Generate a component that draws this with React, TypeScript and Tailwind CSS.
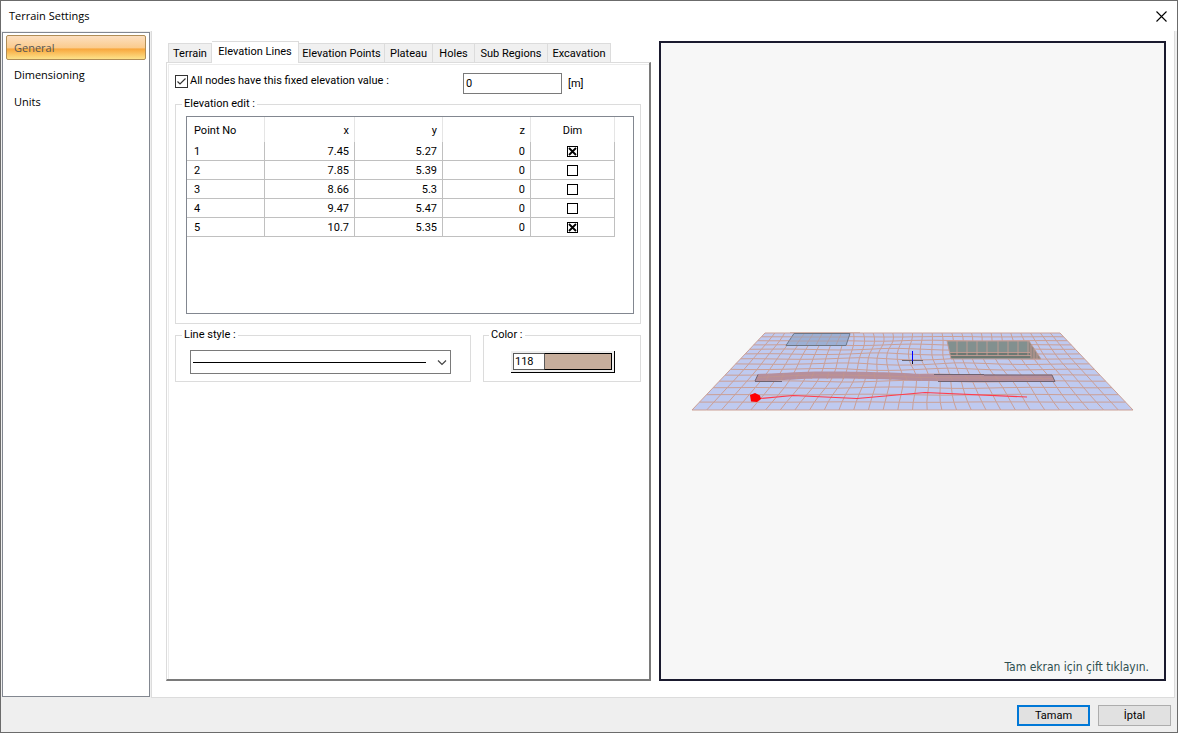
import { useState } from "react"
import clsx from "clsx"

interface ElevationPoint {
  no: number
  x: string
  y: string
  z: string
  dim: boolean
}

const initialPoints: ElevationPoint[] = [
  { no: 1, x: "7.45", y: "5.27", z: "0", dim: true },
  { no: 2, x: "7.85", y: "5.39", z: "0", dim: false },
  { no: 3, x: "8.66", y: "5.3", z: "0", dim: false },
  { no: 4, x: "9.47", y: "5.47", z: "0", dim: false },
  { no: 5, x: "10.7", y: "5.35", z: "0", dim: true },
]

const sections = ["General", "Dimensioning", "Units"]

const tabs = [
  { label: "Terrain", width: "w-[44px]" },
  { label: "Elevation Lines", width: "w-[87px]" },
  { label: "Elevation Points", width: "w-[86px]" },
  { label: "Plateau", width: "w-[48px]" },
  { label: "Holes", width: "w-[42px]" },
  { label: "Sub Regions", width: "w-[73px]" },
  { label: "Excavation", width: "w-[63px]" },
]

const COLS = 30
const ROWS = 14

function meshNode(i: number, j: number) {
  const u = i / COLS
  const v = j / ROWS
  const depth = (v * 0.67) / (1 - v * 0.33)
  const edge = Math.sin(Math.PI * u) * Math.sin(Math.PI * v)
  const sides = Math.sin(Math.PI * v) * Math.sin(2 * Math.PI * u)
  const left = 93 - 73 * depth
  const right = 388 + 73 * depth
  const x = left + (right - left) * u + edge * (3 * Math.sin(i * 0.7 + j * 0.3) + 3 * Math.cos(j * 0.6)) + sides * 6
  const y = 27 + 77 * depth + edge * 1.2 * Math.sin(i * 0.55 + j * 0.9)
  return `${x.toFixed(1)} ${y.toFixed(1)}`
}

function meshPath() {
  const lines: string[] = []
  for (let j = 0; j <= ROWS; j++) {
    lines.push("M" + Array.from({ length: COLS + 1 }, (_, i) => meshNode(i, j)).join("L"))
  }
  for (let i = 0; i <= COLS; i++) {
    lines.push("M" + Array.from({ length: ROWS + 1 }, (_, j) => meshNode(i, j)).join("L"))
  }
  return lines.join("")
}

function TerrainScene() {
  return (
    <svg viewBox="1 0 480 110" className="w-[480px] shrink-0" role="img" aria-label="Terrain preview">
      <path d="M93 27H388L461 104H20Z" fill="#bfcaf0" />
      <path d={meshPath()} fill="none" stroke="#cb9f95" />

      {/* plateau */}
      <path d="M122 27.500H178L174 39.500H114Z" fill="#9bafd4" stroke="#6d7684" />
      <path d="M132 28L124 39M141 28L134 39M150 28L144 39M160 28L154 39M169 28L164 39M119 31H176M117 35H175" stroke="#b39c9f" strokeWidth="0.8" />
      <path d="M118 26.500H188" stroke="#cfa9a0" strokeWidth="0.8" />

      {/* road */}
      <path d="M86 68C115 67 128 65.500 151 65.500S222 66 248 68L380 69L383 75.500L248 75C220 73 180 72.500 151 72.500S110 75 83 75.500Z" fill="#b68f9c" />
      <path
        d="M85 71.500C115 70 130 69 151 69S222 70 248 71.500L381 72.500M97 68L94 75M112 67L109 74M127 66L124 73M142 66L139 73M157 66L155 73M172 66L171 73M187 66L187 73M202 66L203 73M217 67L219 74M232 67L235 74M247 68L250 75M262 68L266 75M277 68L281 75M292 68L297 75M307 68L312 75M322 68L327 75M337 69L342 75M352 69L357 75M367 69L372 75"
        fill="none"
        stroke="#c0958f"
        strokeWidth="0.8"
      />
      <path d="M83 75L86 68.500M83 75.500H110M262 68.500H312M312 69H380M266 75.500H383M380 69L383 75.500" fill="none" stroke="#6f6370" />

      {/* excavation */}
      <path d="M275 35H357L369 53H279Z" fill="#82908f" />
      <path d="M278 46.500H358L360 52H279Z" fill="#6c7872" />
      <path d="M357 35L369 53H360L357 46Z" fill="#8f8681" />
      <path
        d="M275 35H357L369 53H279ZM285 35V50M295 35V50M305 35V50M315 35V50M326 35V50M336 35V50M346 35V50M356 35V50M277 46.500H358M278 49.500H359M359 39V52M362 43V53M365 47V53"
        fill="none"
        stroke="#c39c94"
        strokeWidth="0.9"
      />

      {/* elevation line */}
      <path d="M88 92.500L121 89.500L185 92.500L253 86.500L355 91" fill="none" stroke="#ff3b4e" strokeWidth="1.200" />
      <path d="M78 89L83 87L88 89.500L89 93L85 96L79 95.500Z" fill="#ff0000" />

      {/* origin cross */}
      <g shapeRendering="crispEdges">
        <rect x="230" y="54" width="21" height="1" fill="#6b6670" />
        <rect x="240" y="45" width="1" height="10" fill="#0000ff" />
        <rect x="240" y="55" width="1" height="3" fill="#10102a" />
      </g>
    </svg>
  )
}

function Sidebar() {
  const [active, setActive] = useState("General")
  return (
    <nav className="mt-[1px] mb-[1px] flex w-[148px] shrink-0 flex-col gap-[2px] border border-[#828790] bg-white px-[3px] pt-[2px] font-['Open_Sans',sans-serif]">
      {sections.map((name) => (
        <button
          key={name}
          onClick={() => setActive(name)}
          className={clsx(
            "h-[25px] rounded-[2px] border px-[7px] text-left",
            name === active
              ? "border-[#b08d56] bg-[linear-gradient(#fcdfc0_0%,#fbcb8c_52%,#f8a63c_56%,#fde28a_100%)] text-[#555555]"
              : "border-transparent text-black"
          )}
        >
          {name}
        </button>
      ))}
    </nav>
  )
}

function PointsTable() {
  const [points, setPoints] = useState(initialPoints)

  const toggle = (no: number) => setPoints(points.map((p) => (p.no === no ? { ...p, dim: !p.dim } : p)))

  return (
    <div className="h-[198px] border border-[#828790] bg-white">
      <table className="w-[428px] table-fixed border-separate border-spacing-0">
        <colgroup>
          <col className="w-[78px]" />
          <col className="w-[90px]" />
          <col className="w-[88px]" />
          <col className="w-[88px]" />
          <col className="w-[84px]" />
        </colgroup>
        <thead>
          <tr className="h-[25px]">
            <th className="border-r border-[#e5e5e5] p-0 pt-[2px] pl-[7px] text-left font-normal">Point No</th>
            <th className="border-r border-[#e5e5e5] p-0 pt-[2px] pr-[5px] text-right font-normal">x</th>
            <th className="border-r border-[#e5e5e5] p-0 pt-[2px] pr-[5px] text-right font-normal">y</th>
            <th className="border-r border-[#e5e5e5] p-0 pt-[2px] pr-[5px] text-right font-normal">z</th>
            <th className="border-r border-[#e5e5e5] p-0 pt-[2px] text-center font-normal">Dim</th>
          </tr>
        </thead>
        <tbody>
          {points.map((p) => (
            <tr key={p.no} className="h-[19px]">
              <td className="border-r border-b border-[#c0c0c0] p-0 pt-[2px] pl-[7px]">{p.no}</td>
              <td className="border-r border-b border-[#c0c0c0] p-0 pt-[2px] pr-[5px] text-right">{p.x}</td>
              <td className="border-r border-b border-[#c0c0c0] p-0 pt-[2px] pr-[5px] text-right">{p.y}</td>
              <td className="border-r border-b border-[#c0c0c0] p-0 pt-[2px] pr-[5px] text-right">{p.z}</td>
              <td className="border-r border-b border-[#c0c0c0] p-0">
                <label className="relative mx-auto block h-[11px] w-[11px]">
                  <input
                    type="checkbox"
                    aria-label={`Dim ${p.no}`}
                    checked={p.dim}
                    onChange={() => toggle(p.no)}
                    className="block h-[11px] w-[11px] appearance-none border border-black bg-white"
                  />
                  {p.dim && (
                    <svg viewBox="0 0 11 11" className="pointer-events-none absolute inset-0 h-[11px] w-[11px]">
                      <path d="M2 2L9 9M9 2L2 9" stroke="#000" strokeWidth="1.800" />
                    </svg>
                  )}
                </label>
              </td>
            </tr>
          ))}
        </tbody>
      </table>
    </div>
  )
}

function ElevationLinesTab() {
  const [fixed, setFixed] = useState(true)
  const [value, setValue] = useState("0")
  const [color, setColor] = useState("118")

  return (
    <div className="pt-[8px] pr-[8px] pl-[6px]">
      <div className="flex h-[21px] items-start">
        <label className="flex w-[288px] items-center gap-[2px] leading-[16px]">
          <span className="relative block h-[13px] w-[13px]">
            <input
              type="checkbox"
              checked={fixed}
              onChange={() => setFixed(!fixed)}
              className="block h-[13px] w-[13px] appearance-none border border-[#333333] bg-white"
            />
            {fixed && (
              <svg viewBox="0 0 13 13" className="pointer-events-none absolute inset-0 h-[13px] w-[13px]">
                <path d="M2.500 6.500L5 9L10.500 3.500" fill="none" stroke="#333" strokeWidth="1.200" />
              </svg>
            )}
          </span>
          All nodes have this fixed elevation value :
        </label>
        <input
          aria-label="Elevation value"
          value={value}
          onChange={(e) => setValue(e.target.value)}
          className="h-[21px] w-[99px] border border-[#7a7a7a] bg-white px-[2px] outline-none"
        />
        <span className="pl-[6px] leading-[21px]">[m]</span>
      </div>

      <fieldset className="mt-[3px] border border-[#dcdcdc] pt-[5px] pr-[6px] pb-[9px] pl-[10px]">
        <legend className="-ml-[4px] px-[2px]">Elevation edit :</legend>
        <PointsTable />
      </fieldset>

      <div className="mt-[4px] flex gap-[12px]">
        <fieldset className="w-[296px] shrink-0 border border-[#dcdcdc] px-[14px] pt-[8px] pb-[7px]">
          <legend className="-ml-[8px] px-[2px]">Line style :</legend>
          <div className="relative w-[261px]">
            <select
              aria-label="Line style"
              className="block h-[24px] w-full appearance-none border border-[#7a7a7a] bg-white text-transparent outline-none"
            >
              <option aria-label="Solid" value="solid"></option>
            </select>
            <svg viewBox="0 0 261 24" className="pointer-events-none absolute inset-0 h-[24px] w-[261px]">
              <path d="M3 12.500H236" stroke="#000" />
              <path d="M248 10.500L252 14.500L256 10.500" fill="none" stroke="#444" strokeWidth="1.200" />
            </svg>
          </div>
        </fieldset>

        <fieldset className="min-w-0 flex-1 border border-[#dcdcdc] pt-[8px] pr-[6px] pb-[7px] pl-[27px]">
          <legend className="-ml-[22px] px-[2px]">Color :</legend>
          <div className="mt-[1px] flex h-[22px] w-[104px] border-r border-b border-black bg-[#efefef] p-[2px]">
            <input
              aria-label="Color"
              value={color}
              onChange={(e) => setColor(e.target.value)}
              className="h-[17px] w-[31px] border border-r-0 border-[#5a5a5a] bg-white px-[1px] outline-none"
            />
            <button aria-label="Pick color" className="h-[17px] flex-1 border border-black border-l-[#5a5a5a] bg-[#c7ae9c]" />
          </div>
        </fieldset>
      </div>
    </div>
  )
}

export default function App() {
  const [tab, setTab] = useState("Elevation Lines")

  return (
    <div className="flex min-h-screen flex-col border border-[#6b6b6b] bg-[#efefef] font-['Roboto','Liberation_Sans',sans-serif] text-[11px] leading-[14px] text-black">
      <header className="flex h-[30px] items-center justify-between bg-white pr-[10px] pl-[8px]">
        <h1 className="font-['Open_Sans',sans-serif]">Terrain Settings</h1>
        <button aria-label="Close">
          <svg viewBox="0 0 11 11" className="h-[11px] w-[11px]">
            <path d="M0.500 0.500L10.500 10.500M10.500 0.500L0.500 10.500" stroke="#000" strokeWidth="1.100" />
          </svg>
        </button>
      </header>

      <div className="flex flex-1 pr-[2px] pl-[1px]">
        <Sidebar />

        <main className="ml-[1px] flex flex-1 border border-t-0 border-[#dcdcdc] bg-white pt-[10px] pr-[8px] pb-[16px] pl-[14px]">
          <div className="flex w-[485px] flex-col">
            <div role="tablist" className="flex h-[21px] items-end pl-[2px]">
              {tabs.map(({ label, width }) => (
                <button
                  key={label}
                  role="tab"
                  aria-selected={label === tab}
                  onClick={() => setTab(label)}
                  className={clsx(
                    "shrink-0 border-t border-r border-[#dcdcdc] whitespace-nowrap first:border-l",
                    width,
                    label === tab ? "relative -mb-[1px] h-[22px] bg-white pb-[2px]" : "h-[19px] bg-[#f0f0f0] pt-[1px]"
                  )}
                >
                  {label}
                </button>
              ))}
            </div>
            <section
              role="tabpanel"
              className="flex-1 border-t border-r-2 border-b-2 border-l border-t-[#dcdcdc] border-r-[#7a7a7a] border-b-[#7a7a7a] border-l-[#dcdcdc] bg-white"
            >
              <div className="h-full pt-[1px] pl-[1px]">
                <div className="h-full border-t border-l border-[#ececec]">
                  <ElevationLinesTab />
                </div>
              </div>
            </section>
          </div>

          <section className="relative ml-[8px] flex flex-1 items-center justify-center overflow-hidden border-2 border-[#1a1a2e] bg-[#f7f7f7]">
            <TerrainScene />
            <p className="absolute right-[15px] bottom-[5px] font-['DejaVu_Sans_Condensed','DejaVu_Sans',sans-serif] text-[12px] text-[#2f4f4f]">
              Tam ekran için çift tıklayın.
            </p>
          </section>
        </main>
      </div>

      <footer className="flex h-[34px] items-center justify-end gap-[8px] pr-[6px]">
        <button className="h-[21px] w-[73px] border-2 border-[#0078d7] bg-[#e1e1e1] pt-[2px]">Tamam</button>
        <button className="h-[21px] w-[73px] border border-[#adadad] bg-[#e1e1e1] pt-[2px]">İptal</button>
      </footer>
    </div>
  )
}
